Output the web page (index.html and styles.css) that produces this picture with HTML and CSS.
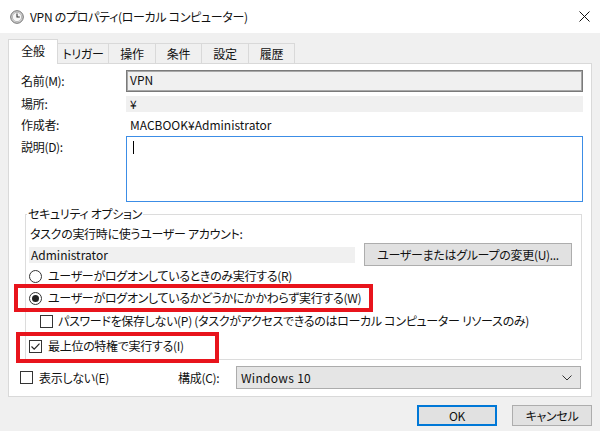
FILE: index.html
```html
<!DOCTYPE html>
<html lang="ja">
<head>
    <meta charset="UTF-8">
    <title>VPN のプロパティ</title>
    <link rel="stylesheet" href="styles.css">
</head>
<body>
    <div class="window">
        <div class="titlebar">
            <svg class="app-icon" viewBox="0 0 14 14">
                <circle cx="7" cy="7" r="6.3" fill="#d6d6d6" stroke="#6e6e6e" stroke-width="1"/>
                <circle cx="7" cy="7" r="4.6" fill="#f7f7f7" stroke="#9a9a9a" stroke-width="0.6"/>
                <path d="M7 3.6 V7 H9.8" fill="none" stroke="#333" stroke-width="1.1"/>
            </svg>
            <span class="title">VPN のプロパティ(ローカル コンピューター)</span>
            <svg class="close" viewBox="0 0 11 11">
                <path d="M0.5 0.5 L10.5 10.5 M10.5 0.5 L0.5 10.5" stroke="#111" stroke-width="1"/>
            </svg>
        </div>

        <div class="content">
            <div class="tabs">
                <div class="tab active">全般</div>
                <div class="tab tab-wide">トリガー</div>
                <div class="tab">操作</div>
                <div class="tab tab-narrow">条件</div>
                <div class="tab">設定</div>
                <div class="tab tab-narrow">履歴</div>
            </div>

            <div class="panel">
                <div class="row">
                    <label>名前(M):</label>
                    <div class="field name-field">VPN</div>
                </div>
                <div class="row row-location">
                    <label>場所:</label>
                    <div class="field">¥</div>
                </div>
                <div class="row row-author">
                    <label>作成者:</label>
                    <div class="plain">MACBOOK¥Administrator</div>
                </div>
                <div class="row row-desc">
                    <label>説明(D):</label>
                    <div class="desc"><div class="caret"></div></div>
                </div>

                <fieldset class="security">
                    <legend>セキュリティ オプション</legend>
                    <div class="account-label">タスクの実行時に使うユーザー アカウント:</div>
                    <div class="account-row">
                        <div class="account-field">Administrator</div>
                        <button class="btn change-btn">ユーザーまたはグループの変更(U)...</button>
                    </div>
                    <div class="option opt-r1">
                        <span class="radio"></span>
                        <span>ユーザーがログオンしているときのみ実行する(R)</span>
                    </div>
                    <div class="option opt-r2">
                        <span class="radio checked"></span>
                        <span>ユーザーがログオンしているかどうかにかかわらず実行する(W)</span>
                    </div>
                    <div class="option opt-c1">
                        <span class="check"></span>
                        <span>パスワードを保存しない(P) (タスクがアクセスできるのはローカル コンピューター リソースのみ)</span>
                    </div>
                    <div class="option opt-c2">
                        <span class="check">
                            <svg viewBox="0 0 13 13"><path d="M2.5 6.5 L5.2 9.2 L10.5 3.6" fill="none" stroke="#222" stroke-width="1.2"/></svg>
                        </span>
                        <span>最上位の特権で実行する(I)</span>
                    </div>
                </fieldset>

                <div class="bottom-row">
                    <div class="option hide-opt">
                        <span class="check"></span>
                        <span>表示しない(E)</span>
                    </div>
                    <label class="config-label">構成(C):</label>
                    <div class="select">
                        <span>Windows 10</span>
                        <svg class="chevron" viewBox="0 0 10 6"><path d="M0.5 0.5 L5 5 L9.5 0.5" fill="none" stroke="#333" stroke-width="1"/></svg>
                    </div>
                </div>
            </div>

            <div class="buttons">
                <button class="btn btn-default">OK</button>
                <button class="btn">キャンセル</button>
            </div>
        </div>

        <!-- red annotation boxes -->
        <div class="mark mark-run"></div>
        <div class="mark mark-priv"></div>
    </div>
</body>
</html>
```

FILE: styles.css
```css
* {
    box-sizing: border-box;
}
body {
    margin: 0;
    font-family: "Noto Sans CJK JP", "Noto Sans", sans-serif;
    font-size: 12px;
    font-feature-settings: "palt";
    letter-spacing: -0.3px;
    color: #111;
    background: #f0f0f0;
}
.window {
    position: relative;
    width: 600px;
    height: 431px;
    background: #f0f0f0;
    overflow: hidden;
}
.titlebar {
    height: 33px;
    background: #fff;
    display: flex;
    align-items: center;
    padding: 0 10px 0 10px;
}
.app-icon {
    width: 14px;
    height: 14px;
    margin-right: 6px;
}
.title {
    flex: 1;
    line-height: 16px;
}
.close {
    width: 11px;
    height: 11px;
}
.content {
    padding: 6px 8px 0 8px;
}

/* tabs */
.tabs {
    display: flex;
    align-items: flex-start;
    height: 24px;
}
.tab {
    width: 47px;
    height: 20px;
    margin-top: 4px;
    line-height: 19px;
    text-align: center;
    background: #f0f0f0;
    border: 1px solid #d9d9d9;
    border-left: none;
    border-bottom: none;
}
.tab-wide {
    width: 51px;
}
.tab-narrow {
    width: 46px;
}
.tab.active {
    position: relative;
    z-index: 1;
    width: 50px;
    height: 25px;
    margin-top: 0;
    line-height: 22px;
    background: #fff;
    border-left: 1px solid #d9d9d9;
}

/* general panel */
.panel {
    height: 334px;
    background: #fff;
    border: 1px solid #d9d9d9;
    padding: 6px 8px 0 12px;
}
.row {
    display: flex;
    align-items: center;
}
.row label {
    width: 105px;
    line-height: 16px;
}
.field {
    flex: 1;
    height: 16px;
    line-height: 16px;
    background: #f0f0f0;
    padding-left: 4px;
}
.name-field {
    height: 22px;
    line-height: 18px;
    padding-left: 3px;
    letter-spacing: 0;
    border: 1px solid #7a7a7a;
    box-shadow: inset 0 0 0 1px #a8a8a8;
}
.row-location {
    margin-top: 4px;
}
.row-author {
    margin-top: 5px;
}
.plain {
    height: 16px;
    line-height: 16px;
    padding-left: 4px;
    letter-spacing: 0;
}
.row-desc {
    margin-top: 3px;
    align-items: flex-start;
}
.row-desc label {
    padding-top: 3px;
}
.desc {
    flex: 1;
    height: 66px;
    border: 1px solid #3c8de6;
}
.caret {
    width: 1px;
    height: 13px;
    margin: 4px 0 0 6px;
    background: #000;
}

/* security options */
.security {
    margin: 4px 1px 0 4px;
    padding: 4px 9px 5px 3px;
    border: 1px solid #dcdcdc;
    min-width: 0;
}
.security legend {
    padding: 0 1px;
    margin-left: -2px;
    line-height: 16px;
}
.account-label {
    line-height: 16px;
    padding-left: 1px;
}
.account-row {
    display: flex;
    align-items: center;
    justify-content: space-between;
    margin-top: 1px;
}
.account-field {
    width: 326px;
    height: 16px;
    line-height: 16px;
    padding-left: 2px;
    letter-spacing: 0;
    background: #f0f0f0;
}
.option {
    display: flex;
    align-items: center;
    gap: 6px;
    height: 16px;
    line-height: 16px;
    white-space: nowrap;
}
.opt-r1 {
    margin-top: 2px;
}
.opt-r2 {
    margin-top: 6px;
}
.opt-c1 {
    margin-top: 7px;
    padding-left: 11px;
    gap: 5px;
}
.opt-c2 {
    margin-top: 9px;
}
.radio {
    width: 13px;
    height: 13px;
    border: 1px solid #333;
    border-radius: 50%;
    background: #fff;
    flex: none;
    display: flex;
    align-items: center;
    justify-content: center;
}
.radio.checked::after {
    content: "";
    width: 7px;
    height: 7px;
    border-radius: 50%;
    background: #222;
}
.check {
    width: 13px;
    height: 13px;
    border: 1px solid #333;
    background: #fff;
    flex: none;
    position: relative;
}
.check svg {
    position: absolute;
    left: -1px;
    top: -1px;
    width: 13px;
    height: 13px;
}

/* bottom row */
.bottom-row {
    display: flex;
    align-items: center;
    margin: 6px 2px 0 -1px;
}
.hide-opt {
    width: 158px;
}
.config-label {
    width: 58px;
    line-height: 16px;
}
.select {
    flex: 1;
    height: 23px;
    display: flex;
    align-items: center;
    justify-content: space-between;
    padding: 0 8px 0 4px;
    background: #e5e5e5;
    border: 1px solid #acacac;
    letter-spacing: 0.3px;
}
.chevron {
    width: 10px;
    height: 6px;
}

/* buttons */
.btn {
    font: inherit;
    letter-spacing: inherit;
    color: #111;
    background: #e1e1e1;
    border: 1px solid #adadad;
    padding: 0;
}
.change-btn {
    width: 208px;
    height: 23px;
}
.buttons {
    display: flex;
    justify-content: flex-end;
    gap: 15px;
    margin-top: 8px;
}
.buttons .btn {
    width: 80px;
    height: 21px;
}
.btn-default {
    border-color: #0078d7;
    box-shadow: inset 0 0 0 1px #0078d7;
}

.mark {
    position: absolute;
    border: 4px solid #e8141c;
}
.mark-run {
    left: 14px;
    top: 284px;
    width: 359px;
    height: 28px;
}
.mark-priv {
    left: 16px;
    top: 332px;
    width: 203px;
    height: 31px;
}
```
